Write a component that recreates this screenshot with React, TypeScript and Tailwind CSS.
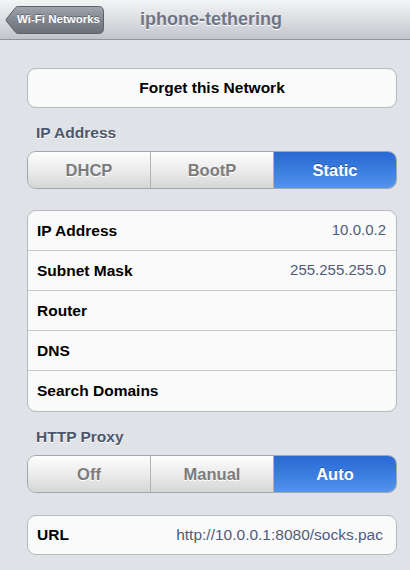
import React from "react";

const font = { fontFamily: '"Liberation Sans", Arial, Helvetica, sans-serif' };

const ipRows = [
  { label: "IP Address", value: "10.0.0.2" },
  { label: "Subnet Mask", value: "255.255.255.0" },
  { label: "Router", value: "" },
  { label: "DNS", value: "" },
  { label: "Search Domains", value: "" },
];

function BackButton() {
  return (
    <div className="relative ml-[5px] h-[28px] w-[99px] shrink-0">
      <svg className="absolute inset-0" width="99" height="28" viewBox="0 0 99 28">
        <defs>
          <linearGradient id="bb" x1="0" y1="0" x2="0" y2="1">
            <stop offset="0" stopColor="#a2a6ae" />
            <stop offset="0.5" stopColor="#80858e" />
            <stop offset="1" stopColor="#6b7079" />
          </linearGradient>
        </defs>
        <path
          d="M13 0.5 H93.5 Q98.5 0.5 98.5 5.5 V22.5 Q98.5 27.5 93.5 27.5 H13 Q11.5 27.5 10.5 26.3 L1.5 15.2 Q0.6 14 1.5 12.8 L10.5 1.7 Q11.5 0.5 13 0.5 Z"
          fill="url(#bb)"
          stroke="#5d6169"
          strokeWidth="1"
        />
      </svg>
      <span className="absolute left-[12px] top-0 flex h-[28px] items-center whitespace-nowrap text-[11.5px] font-bold text-white [text-shadow:0_-1px_0_rgba(0,0,0,0.35)]">
        Wi-Fi Networks
      </span>
    </div>
  );
}

function Segmented({ items, active }: { items: string[]; active: number }) {
  return (
    <div className="ml-[27px] flex h-[38px] w-[370px] overflow-hidden rounded-[9px] border border-[#a3a6ab]">
      {items.map((it, i) => (
        <div
          key={it}
          className={
            i === active
              ? "flex flex-1 items-center justify-center bg-gradient-to-b from-[#2a68d4] via-[#3a7ddf] to-[#5293ea] text-[16.5px] font-bold text-white [text-shadow:0_-1px_0_rgba(0,0,0,0.3)]"
              : "flex flex-1 items-center justify-center border-r border-[#b0b2b6] bg-gradient-to-b from-[#fdfdfd] via-[#ececec] to-[#d6d6d6] text-[16.5px] font-bold text-[#7c7c7c] [text-shadow:0_1px_0_#fff]"
          }
        >
          {it}
        </div>
      ))}
    </div>
  );
}

function Header({ children }: { children: React.ReactNode }) {
  return (
    <div className="mb-[8px] ml-[36px] mt-[15px] text-[15.5px] font-bold leading-[20px] text-[#4c566b] [text-shadow:0_1px_0_#fff]">
      {children}
    </div>
  );
}

export default function App() {
  return (
    <div className="min-h-[570px] w-[410px] bg-[#dfe2e7] pb-4" style={font}>
      {/* Nav bar */}
      <div className="flex h-[40px] items-center border-b border-[#8f939a] bg-gradient-to-b from-[#f3f4f6] via-[#dcdee2] to-[#c1c4ca]">
        <BackButton />
        <div className="ml-[36px] text-[18px] font-bold text-[#6f7584] [text-shadow:0_1px_0_#fff]">
          iphone-tethering
        </div>
      </div>

      {/* Forget */}
      <div className="ml-[27px] mt-[28px] flex h-[40px] w-[370px] items-center justify-center rounded-[9px] border border-[#b7babf] bg-[#fafafa] text-[15.5px] font-bold text-black">
        Forget this Network
      </div>

      <Header>IP Address</Header>
      <Segmented items={["DHCP", "BootP", "Static"]} active={2} />

      {/* IP table */}
      <div className="ml-[27px] mt-[21px] w-[370px] overflow-hidden rounded-[9px] border border-[#b7babf] bg-[#fafafa]">
        {ipRows.map((r, i) => (
          <div
            key={r.label}
            className={
              "flex h-[40px] items-center justify-between pl-[9px] pr-[10px]" +
              (i < ipRows.length - 1 ? " border-b border-[#c9cacd]" : "")
            }
          >
            <span className="text-[15.5px] font-bold text-black">{r.label}</span>
            <span className="text-[15px] text-[#4f5b7a]">{r.value}</span>
          </div>
        ))}
      </div>

      <Header>HTTP Proxy</Header>
      <Segmented items={["Off", "Manual", "Auto"]} active={2} />

      {/* URL */}
      <div className="ml-[27px] mt-[22px] flex h-[40px] w-[370px] items-center justify-between rounded-[9px] border border-[#b7babf] bg-[#fafafa] pl-[9px] pr-[13px]">
        <span className="text-[15.5px] font-bold text-black">URL</span>
        <span className="text-[15.5px] text-[#4f5b7a]">http://10.0.0.1:8080/socks.pac</span>
      </div>
    </div>
  );
}
